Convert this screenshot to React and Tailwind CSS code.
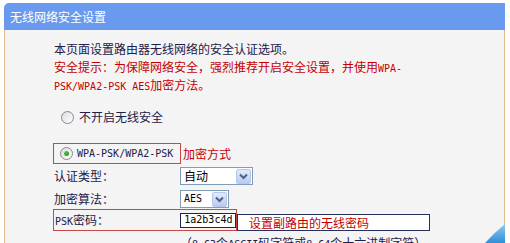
import React from "react";

const cjk = { fontFamily: '"Noto Sans CJK SC", "Noto Sans", sans-serif' };
const mono = "font-['DejaVu_Sans_Mono',monospace] text-[10px] leading-none";

function Radio({ checked }) {
  return (
    <span className="flex h-[13px] w-[13px] shrink-0 items-center justify-center rounded-full border border-[#7c8aa3] bg-gradient-to-br from-[#dedcd4] to-white">
      {checked && (
        <span className="h-[5px] w-[5px] rounded-full bg-gradient-to-br from-[#5fd45f] to-[#1e8c1e]" />
      )}
    </span>
  );
}

function Select({ value, width, isMono }) {
  return (
    <div
      className={`flex h-[18px] items-center justify-between border border-[#7f9db9] bg-white pl-[3px] pr-px ${width}`}
    >
      <span className={isMono ? `${mono} text-black` : "text-[12px] text-black"}>
        {value}
      </span>
      <span className="flex h-[15px] w-[15px] items-center justify-center rounded-[2px] border border-[#b5c8ec] bg-gradient-to-b from-[#e2eafd] to-[#b9cbf1]">
        <svg width="9" height="7" viewBox="0 0 9 7">
          <path d="M1 1.5 L4.5 5 L8 1.5" fill="none" stroke="#4d6185" strokeWidth="2" />
        </svg>
      </span>
    </div>
  );
}

export default function App() {
  return (
    <div
      className="relative h-[243px] w-[510px] overflow-hidden bg-white pt-[3px]"
      style={cjk}
    >
      {/* title bar */}
      <div className="ml-[4px] flex h-[27px] w-[501px] items-center rounded-tl-[5px] bg-[#6a9af0] pl-[6px] text-[12px] text-white">
        无线网络安全设置
      </div>

      {/* body */}
      <div className="ml-[4px] h-[220px] w-[501px] border-x border-[#e6b98c] bg-[#f4f4f4] pl-[49px] pt-[10px] text-[12px] text-[#1e2048]">
        <p className="h-[18px] leading-[18px]">本页面设置路由器无线网络的安全认证选项。</p>
        <p className="h-[18px] leading-[18px] text-[#c40000]">
          安全提示：为保障网络安全，强烈推荐开启安全设置，并使用
          <span className={mono}>WPA-</span>
        </p>
        <p className="h-[17px] leading-[17px] text-[#c40000]">
          <span className={mono}>PSK/WPA2-PSK AES</span>加密方法。
        </p>

        <div className="mt-[15px] flex h-[18px] items-center gap-[5px] pl-[7px]">
          <Radio />
          <span>不开启无线安全</span>
        </div>

        <div className="mt-[17px] flex items-center">
          <div className="-ml-[1px] flex h-[21px] w-[128px] items-center gap-[4px] border border-[#c44a4a] pl-[6px]">
            <Radio checked />
            <span className={`${mono} text-[#1e2048]`}>WPA-PSK/WPA2-PSK</span>
          </div>
          <span className="ml-[2px] text-[#c40000]">加密方式</span>
        </div>

        <div className="mt-[3px] flex h-[18px] items-center">
          <span className="w-[126px]">认证类型：</span>
          <Select value="自动" width="w-[73px]" />
        </div>

        <div className="mt-[5px] flex h-[18px] items-center">
          <span className="w-[126px]">加密算法：</span>
          <Select value="AES" width="w-[49px]" isMono />
        </div>

        <div className="mt-px flex items-end">
          <div className="-ml-[1px] flex h-[22px] w-[184px] items-center border border-[#c44a4a] pl-px">
            <span className="w-[126px]">
              <span className={mono}>PSK</span>密码：
            </span>
            <div className="flex h-[15px] w-[56px] items-center border border-[#1c2550] bg-white pl-[3px]">
              <span className={`${mono} text-black`}>1a2b3c4d</span>
            </div>
          </div>
          <div className="flex h-[17px] w-[193px] items-center border border-[#27305a] bg-white pl-[11px] text-[#c40000]">
            设置副路由的无线密码
          </div>
        </div>

        <p className="ml-[126px] mt-[3px] leading-[18px]">
          （<span className={mono}>8-63</span>个<span className={mono}>ASCII</span>码字符或
          <span className={mono}>8-64</span>个十六进制字符）
        </p>
      </div>

      {/* corner decoration */}
      <svg
        className="absolute bottom-0 right-[5px]"
        width="20"
        height="19"
        viewBox="0 0 20 19"
      >
        <defs>
          <linearGradient id="sw" x1="0" y1="0" x2="0" y2="1">
            <stop offset="0" stopColor="#8ecbf0" />
            <stop offset="1" stopColor="#2f8fd6" />
          </linearGradient>
        </defs>
        <path d="M0 19 Q10 8 20 0 L20 19 Z" fill="url(#sw)" />
      </svg>
    </div>
  );
}
